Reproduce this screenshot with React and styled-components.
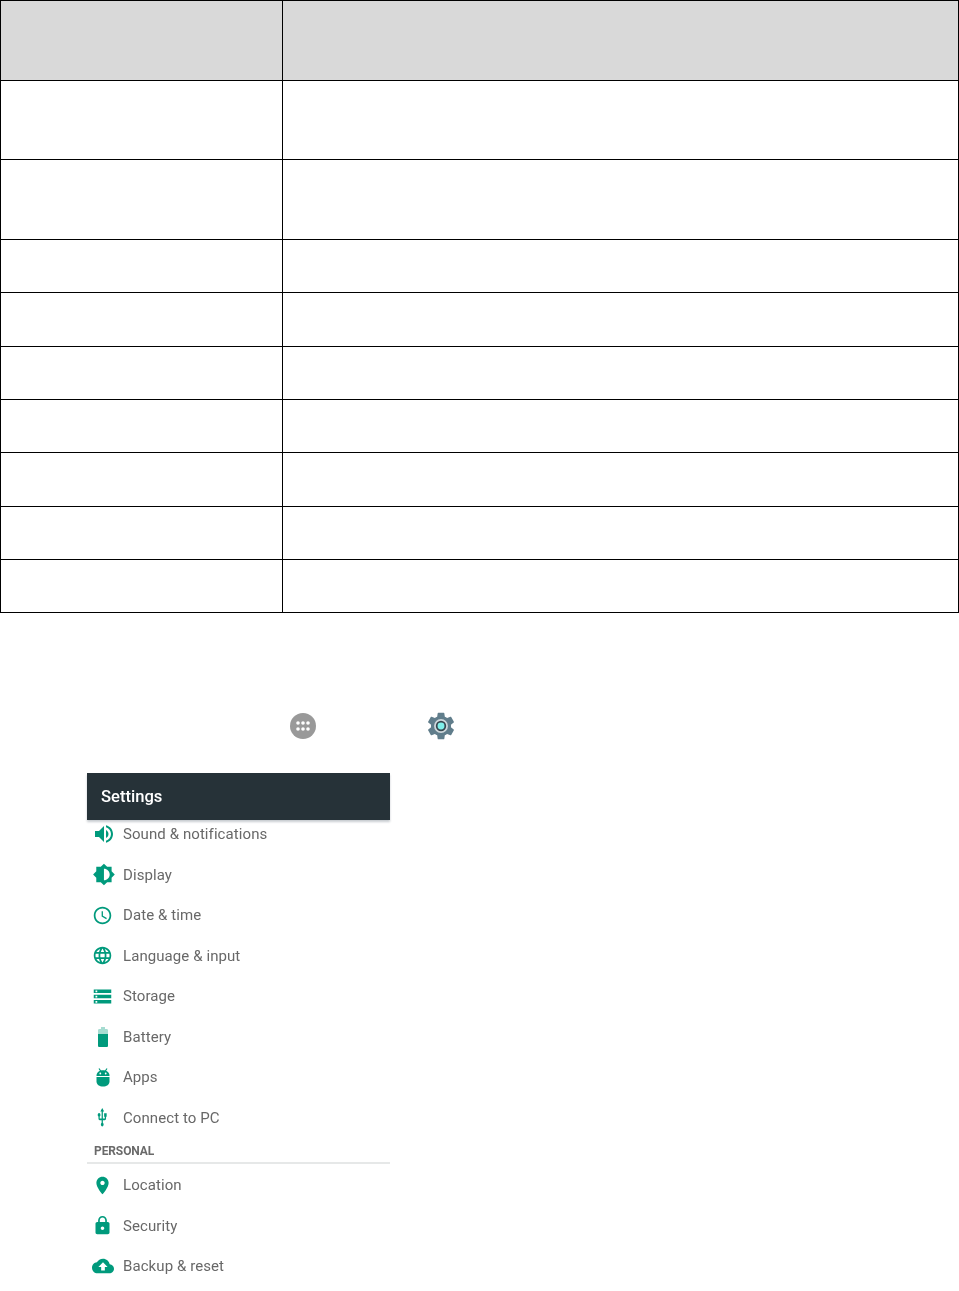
import React from "react";
import styled, { createGlobalStyle } from "styled-components";

const Global = createGlobalStyle`
  html, body { margin: 0; padding: 0; background: #fff; height: 1291px; overflow: hidden; }
  body { font-family: Roboto, "Liberation Sans", sans-serif; }
`;

const Page = styled.main`
  display: flex;
  flex-direction: column;
  width: 959px;
  height: 1291px;
  overflow: hidden;
`;

const Table = styled.section`
  display: flex;
  flex-direction: column;
  border-top: 1px solid #000;
  border-left: 1px solid #000;
`;

const Row = styled.div`
  display: grid;
  grid-template-columns: 282px 676px;
  height: ${(p) => p.$h}px;
  box-sizing: border-box;
  border-bottom: 1px solid #000;
  background: ${(p) => (p.$head ? "#d9d9d9" : "#fff")};
`;

const Cell = styled.div`
  border-right: 1px solid #000;
`;

const Instruction = styled.div`
  display: flex;
  align-items: center;
  height: 32px;
  margin-top: 97px;
  padding-left: 290px;
  gap: 109px;
`;

const Phone = styled.section`
  display: flex;
  flex-direction: column;
  width: 303px;
  margin: 31px 0 0 87px;
  filter: blur(0.5px);
`;

const AppBar = styled.header`
  position: relative;
  z-index: 1;
  display: flex;
  align-items: center;
  height: 47px;
  padding: 0 0 0 14px;
  box-sizing: border-box;
  background: #263238;
  color: #fff;
  font-size: 16.6px;
  font-weight: 500;
  box-shadow: 0 2px 2px rgba(120, 130, 140, 0.4);
`;

const List = styled.div`
  display: flex;
  flex-direction: column;
  margin-top: ${(p) => p.$overlap || 0}px;
`;

const Item = styled.div`
  display: flex;
  align-items: center;
  height: 40.5px;
  gap: 10px;
  padding-left: 5px;
  color: #686868;
  font-size: 15px;
  letter-spacing: 0.08px;
`;

const IconBox = styled.span`
  display: flex;
  align-items: center;
  justify-content: center;
  width: 21px;
  height: 21px;
  flex: none;
  color: #009a7c;
`;

const SectionTitle = styled.div`
  height: 29px;
  padding: 9px 0 0 7px;
  box-sizing: border-box;
  margin: -2.8px 0 1px;
  color: #6a6a6a;
  font-size: 12px;
  font-weight: 700;
  letter-spacing: -0.1px;
  border-bottom: 2px solid #e6e8e8;
`;

const Glyph = ({ size = 21, x = 0, children }) => (
  <svg
    width={size}
    height={size}
    viewBox={`${x} 0 24 24`}
    fill="currentColor"
    aria-hidden="true"
    style={{ flex: "none", overflow: "visible" }}
  >
    {children}
  </svg>
);

const icons = {
  sound: (
    <Glyph size={24} x={-2}>
      <path d="M2 9v6h4l5 5V4L6 9H2zm13.500 3c0-1.770-1.020-3.290-2.500-4.030v8.050c1.480-.73 2.500-2.250 2.500-4.020zM13 3.230v2.060c2.890.86 5 3.540 5 6.710s-2.110 5.850-5 6.710v2.060c4.010-.91 7-4.490 7-8.770s-2.990-7.860-7-8.770z" />
    </Glyph>
  ),
  display: (
    <Glyph size={23} x={-1.5}>
      <path d="M20 15.310L23.310 12 20 8.690V4h-4.690L12 .69 8.690 4H4v4.690L.69 12 4 15.310V20h4.690L12 23.310 15.310 20H20v-4.690zM12 18V6c3.310 0 6 2.690 6 6s-2.690 6-6 6z" />
    </Glyph>
  ),
  time: (
    <Glyph size={21}>
      <path d="M11.990 2C6.470 2 2 6.480 2 12s4.470 10 9.990 10C17.520 22 22 17.520 22 12S17.520 2 11.990 2zM12 20c-4.420 0-8-3.580-8-8s3.580-8 8-8 8 3.580 8 8-3.580 8-8 8zm.5-13H11v6l5.250 3.150.75-1.230-4.500-2.670z" />
    </Glyph>
  ),
  language: (
    <Glyph size={21}>
      <path d="M11.990 2C6.470 2 2 6.480 2 12s4.470 10 9.990 10C17.520 22 22 17.520 22 12S17.520 2 11.990 2zm6.930 6h-2.950c-.32-1.250-.78-2.450-1.380-3.560 1.840.63 3.370 1.910 4.330 3.560zM12 4.040c.83 1.200 1.480 2.530 1.910 3.960h-3.820c.43-1.430 1.080-2.760 1.910-3.960zM4.260 14C4.100 13.360 4 12.690 4 12s.1-1.360.26-2h3.380c-.08.66-.14 1.320-.14 2 0 .68.06 1.340.14 2H4.260zm.82 2h2.950c.32 1.250.78 2.450 1.380 3.560-1.840-.63-3.370-1.900-4.330-3.560zm2.950-8H5.080c.96-1.660 2.490-2.930 4.330-3.560C8.810 5.550 8.350 6.750 8.030 8zM12 19.960c-.83-1.200-1.480-2.530-1.910-3.960h3.820c-.43 1.430-1.080 2.760-1.910 3.960zM14.340 14H9.660c-.09-.66-.16-1.320-.16-2 0-.68.07-1.350.16-2h4.680c.09.65.16 1.320.16 2 0 .68-.07 1.340-.16 2zm.25 5.560c.6-1.110 1.060-2.310 1.380-3.560h2.950c-.96 1.650-2.490 2.930-4.330 3.560zM16.360 14c.08-.66.14-1.320.14-2 0-.68-.06-1.340-.14-2h3.380c.16.64.26 1.310.26 2s-.1 1.360-.26 2h-3.380z" />
    </Glyph>
  ),
  storage: (
    <Glyph size={21}>
      <path d="M2 20h20v-4H2v4zm2-3h2v2H4v-2zM2 4v4h20V4H2zm4 3H4V5h2v2zm-4 7h20v-4H2v4zm2-3h2v2H4v-2z" />
    </Glyph>
  ),
  battery: (
    <Glyph size={24}>
      <path opacity="0.35" d="M17 5.330C17 4.600 16.400 4 15.670 4H14V2h-4v2H8.330C7.600 4 7 4.600 7 5.330V9h10V5.330z" />
      <path d="M7 9v11.670C7 21.400 7.600 22 8.330 22h7.330c.74 0 1.340-.6 1.340-1.330V9H7z" />
    </Glyph>
  ),
  apps: (
    <Glyph size={24}>
      <path d="M5.500 12h13v4.500c0 3-2.900 5-6.500 5s-6.500-2-6.500-5V12z" />
      <path d="M5.500 10.800C5.500 7.500 8.400 5.300 12 5.300s6.500 2.200 6.500 5.500v.2h-13v-.2z" />
      <path d="M8 3.500l2 3M16 3.500l-2 3" stroke="currentColor" strokeWidth="1.200" />
      <circle cx="9.300" cy="8.500" r="0.900" fill="#fff" />
      <circle cx="14.700" cy="8.500" r="0.900" fill="#fff" />
    </Glyph>
  ),
  usb: (
    <Glyph size={21}>
      <path
        transform="translate(12 0) scale(.72 1) translate(-12.400 0)"
        d="M15 7v4h1v2h-3V5h2l-3-4-3 4h2v8H8v-2.070c.7-.37 1.200-1.080 1.200-1.930 0-1.210-.99-2.200-2.200-2.200-1.210 0-2.200.99-2.200 2.200 0 .85.5 1.560 1.200 1.930V13c0 1.110.89 2 2 2h3v3.050c-.71.37-1.200 1.100-1.200 1.950 0 1.220.99 2.200 2.200 2.200 1.210 0 2.200-.98 2.200-2.200 0-.85-.49-1.580-1.200-1.950V15h3c1.110 0 2-.89 2-2v-2h1V7h-4z"
      />
    </Glyph>
  ),
  location: (
    <Glyph size={21}>
      <path d="M12 2C8.130 2 5 5.130 5 9c0 5.250 7 13 7 13s7-7.750 7-13c0-3.870-3.130-7-7-7zm0 9.500c-1.380 0-2.500-1.120-2.500-2.500s1.120-2.500 2.500-2.500 2.500 1.120 2.500 2.500-1.120 2.500-2.500 2.500z" />
    </Glyph>
  ),
  security: (
    <Glyph size={21}>
      <path d="M18 8h-1V6c0-2.760-2.240-5-5-5S7 3.240 7 6v2H6c-1.100 0-2 .9-2 2v10c0 1.100.9 2 2 2h12c1.100 0 2-.9 2-2V10c0-1.100-.9-2-2-2zm-6 9c-1.100 0-2-.9-2-2s.9-2 2-2 2 .9 2 2-.9 2-2 2zm3.100-9H8.900V6c0-1.710 1.390-3.100 3.100-3.100 1.710 0 3.100 1.390 3.100 3.100v2z" />
    </Glyph>
  ),
  backup: (
    <Glyph size={22}>
      <path d="M19.350 10.040C18.670 6.590 15.640 4 12 4 9.110 4 6.600 5.640 5.350 8.040 2.340 8.360 0 10.910 0 14c0 3.310 2.690 6 6 6h13c2.760 0 5-2.240 5-5 0-2.640-2.050-4.780-4.650-4.960zM14 13v4h-4v-4H7l5-5 5 5h-3z" />
    </Glyph>
  ),
};

const rowHeights = [80, 79, 80, 53, 54, 53, 53, 54, 53, 53];
const system = [
  ["sound", "Sound & notifications"],
  ["display", "Display"],
  ["time", "Date & time"],
  ["language", "Language & input"],
  ["storage", "Storage"],
  ["battery", "Battery"],
  ["apps", "Apps"],
  ["usb", "Connect to PC"],
];
const personal = [
  ["location", "Location"],
  ["security", "Security"],
  ["backup", "Backup & reset"],
];

const SettingsRow = ({ icon, label }) => (
  <Item>
    <IconBox>{icons[icon]}</IconBox>
    {label}
  </Item>
);

export default function App() {
  return (
    <Page>
      <Global />
      <Table>
        {rowHeights.map((h, i) => (
          <Row key={i} $h={h} $head={i === 0}>
            <Cell />
            <Cell />
          </Row>
        ))}
      </Table>
      <Instruction>
        <svg width="26" height="26" viewBox="0 0 26 26" aria-hidden="true">
          <circle cx="13" cy="13" r="13" fill="#999" />
          {[8, 13, 18].flatMap((x) =>
            [10, 16].map((y) => <circle key={`${x}-${y}`} cx={x} cy={y} r="1.800" fill="#fff" />)
          )}
        </svg>
        <svg width="32" height="32" viewBox="0 0 24 24" aria-hidden="true">
          <path
            fill="#607d8b"
            d="M19.430 12.980c.04-.32.07-.64.07-.98s-.03-.66-.07-.98l2.110-1.650c.19-.15.24-.42.12-.64l-2-3.460c-.12-.22-.39-.3-.61-.22l-2.490 1c-.52-.4-1.080-.73-1.690-.98l-.38-2.650C14.460 2.180 14.250 2 14 2h-4c-.25 0-.46.18-.49.42l-.38 2.650c-.61.25-1.170.59-1.690.98l-2.490-1c-.23-.09-.49 0-.61.22l-2 3.460c-.13.22-.07.49.12.64l2.110 1.650c-.04.32-.07.65-.07.98s.03.66.07.98l-2.110 1.650c-.19.15-.24.42-.12.64l2 3.460c.12.22.39.3.61.22l2.490-1c.52.4 1.080.73 1.690.98l.38 2.650c.03.24.24.42.49.42h4c.25 0 .46-.18.49-.42l.38-2.650c.61-.25 1.170-.59 1.690-.98l2.490 1c.23.09.49 0 .61-.22l2-3.460c.12-.22.07-.49-.12-.64l-2.110-1.650z"
          />
          <circle cx="12" cy="12" r="5.200" fill="#cfd8dc" />
          <circle cx="12" cy="12" r="3.900" fill="#37474f" />
          <circle cx="12" cy="12" r="2.600" fill="#80f0ea" />
        </svg>
      </Instruction>
      <Phone>
        <AppBar>Settings</AppBar>
        <List $overlap={-6}>
          {system.map(([icon, label]) => (
            <SettingsRow key={label} icon={icon} label={label} />
          ))}
        </List>
        <SectionTitle>PERSONAL</SectionTitle>
        <List>
          {personal.map(([icon, label]) => (
            <SettingsRow key={label} icon={icon} label={label} />
          ))}
        </List>
      </Phone>
    </Page>
  );
}
